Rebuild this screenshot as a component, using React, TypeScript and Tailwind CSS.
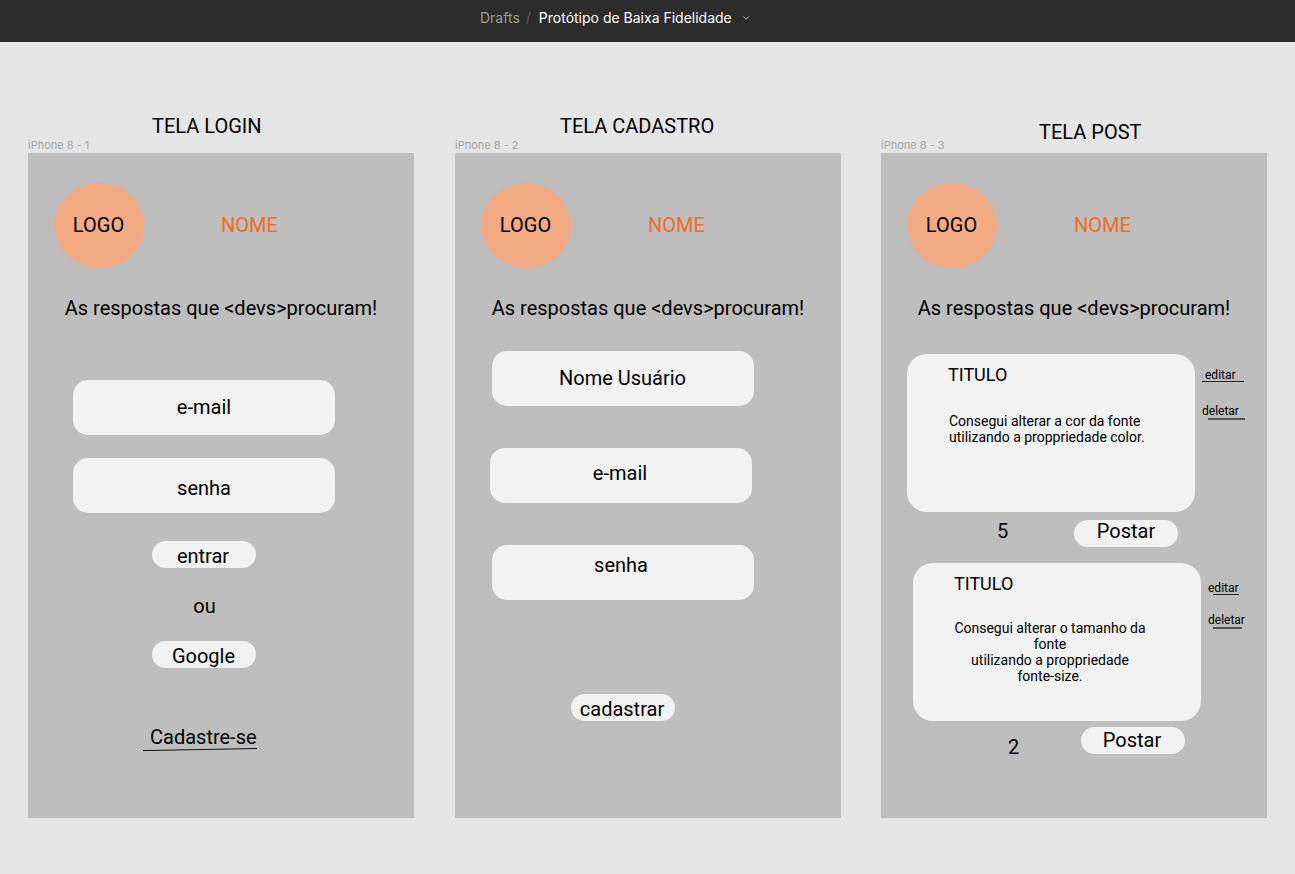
import React from 'react';
import { ChevronDown } from 'lucide-react';

const roboto = "font-['Roboto',sans-serif]";

const FrameHead: React.FC<{ title: string; label: string; titleLeft: string; titleGap: string }> = ({
  title,
  label,
  titleLeft,
  titleGap,
}) => (
  <div className="flex h-[111px] flex-col justify-end">
    <div className={`h-6 text-[20px] leading-6 text-black ${roboto} ${titleLeft} ${titleGap}`}>{title}</div>
    <div className="h-4 font-['Inter',sans-serif] text-[11px] leading-4 text-[#a8a8a8]">{label}</div>
  </div>
);

const Brand: React.FC = () => (
  <>
    <div className="ml-[26px] mt-[30px] flex items-center">
      <div className="flex h-[85px] w-[90px] items-center justify-center rounded-[50%] bg-[#f2ab82] pb-[2px] pr-[1px] text-[20px] text-black">
        LOGO
      </div>
      <div className="ml-[77px] pb-[2px] text-[20px] text-[#f26c24]">NOME</div>
    </div>
    <div className="mt-[28px] h-6 text-center text-[20px] leading-6 text-black">
      As respostas que &lt;devs&gt;procuram!
    </div>
  </>
);

const Field: React.FC<{ text: string; className: string }> = ({ text, className }) => (
  <div
    className={`flex h-[55px] w-[262px] justify-center rounded-[15px] bg-[#f2f2f2] text-[20px] leading-6 text-black ${className}`}
  >
    {text}
  </div>
);

const Pill: React.FC<{ text: string; className: string }> = ({ text, className }) => (
  <div
    className={`flex h-[27px] w-[104px] items-center justify-center rounded-full bg-[#f2f2f2] text-[20px] leading-6 text-black ${className}`}
  >
    {text}
  </div>
);

const Frame: React.FC<{ children: React.ReactNode }> = ({ children }) => (
  <div className={`flex h-[665px] w-[386px] flex-col bg-[#bebebe] ${roboto}`}>{children}</div>
);

const SideLink: React.FC<{ text: string; textLeft: string; lineClass: string; className: string }> = ({
  text,
  textLeft,
  lineClass,
  className,
}) => (
  <div className={`relative h-4 w-[50px] text-[12px] leading-4 text-black ${className}`}>
    <span className={textLeft}>{text}</span>
    <div className={`absolute bg-[#222] ${lineClass}`} />
  </div>
);

const App: React.FC = () => {
  return (
    <div className="flex h-[874px] w-[1295px] flex-col overflow-hidden bg-[#e5e5e5]">
      {/* Top bar */}
      <header className="flex h-[42px] items-center bg-[#2c2c2c] pb-[7px] pl-[480px] font-['Inter',sans-serif] text-[14px]">
        <span className="text-[#9a9a9a]">Drafts</span>
        <span className="ml-[6px] text-[#5f5f5f]">/</span>
        <span className="ml-[8px] text-white">Protótipo de Baixa Fidelidade</span>
        <ChevronDown className="ml-[9px] mt-[1px] text-[#d0d0d0]" size={10} strokeWidth={2} />
      </header>

      {/* Canvas */}
      <main className="flex pl-[28px]">
        <section className="w-[386px]">
          <FrameHead title="TELA LOGIN" label="iPhone 8 - 1" titleLeft="pl-[124px]" titleGap="mb-[-1px]" />
          <Frame>
            <Brand />
            <Field text="e-mail" className="ml-[45px] mt-[60px] pt-[15px]" />
            <Field text="senha" className="ml-[45px] mt-[23px] pt-[18px]" />
            <Pill text="entrar" className="ml-[124px] mt-[28px] pr-[2px] pt-[2px]" />
            <div className="mt-[26px] h-6 pr-[33px] text-center text-[20px] leading-6 text-black">ou</div>
            <Pill text="Google" className="ml-[124px] mt-[23px] pr-[1px] pt-[2px]" />
            <div className="relative ml-[122px] mt-[57px] h-6 w-[120px] text-[20px] leading-6 text-black">
              Cadastre-se
              <svg className="absolute left-[-7px] top-[22px]" width="116" height="5" viewBox="0 0 116 5">
                <line x1="0" y1="3.6" x2="114" y2="1.5" stroke="#111" strokeWidth="1" />
              </svg>
            </div>
          </Frame>
        </section>

        <section className="ml-[41px] w-[386px]">
          <FrameHead title="TELA CADASTRO" label="iPhone 8 - 2" titleLeft="pl-[105px]" titleGap="mb-[-1px]" />
          <Frame>
            <Brand />
            <Field text="Nome Usuário" className="ml-[37px] mt-[31px] pr-[1px] pt-[15px]" />
            <Field text="e-mail" className="ml-[35px] mt-[42px] pr-[2px] pt-[13px]" />
            <Field text="senha" className="ml-[37px] mt-[42px] pr-[4px] pt-[8px]" />
            <Pill text="cadastrar" className="ml-[116px] mt-[94px] pr-[2px] pt-[2px]" />
          </Frame>
        </section>

        <section className="ml-[40px] w-[386px]">
          <FrameHead title="TELA POST" label="iPhone 8 - 3" titleLeft="pl-[158px]" titleGap="mb-[-7px]" />
          <Frame>
            <Brand />

            <div className="ml-[26px] mt-[34px] flex">
              <article className="h-[158px] w-[288px] rounded-[20px] bg-[#f2f2f2] pl-[41px] pt-[10px] text-black">
                <div className="text-[18px] leading-[22px]">TITULO</div>
                <p className="ml-[1px] mt-[27px] text-[14px] leading-4">
                  Consegui alterar a cor da fonte
                  <br />
                  utilizando a proppriedade color.
                </p>
              </article>
              <div className="flex flex-col">
                <SideLink text="editar" textLeft="ml-[10px]" lineClass="left-[7px] top-[14px] h-px w-[42px]" className="mt-[13px]" />
                <SideLink text="deletar" textLeft="ml-[7px]" lineClass="left-[13px] top-[15px] h-[2px] w-[37px] !bg-[#555]" className="mt-[20px]" />
              </div>
            </div>
            <div className="ml-[116px] mt-[8px] flex h-[27px]">
              <div className="h-[27px] w-[77px] text-[20px] leading-[23px] text-black">5</div>
              <Pill text="Postar" className="pb-[5px]" />
            </div>

            <div className="ml-[32px] mt-[16px] flex">
              <article className="h-[158px] w-[288px] rounded-[20px] bg-[#f2f2f2] pt-[10px] text-black">
                <div className="pl-[41px] text-[18px] leading-[22px]">TITULO</div>
                <p className="mt-[25px] pr-[14px] text-center text-[14px] leading-4">
                  Consegui alterar o tamanho da
                  <br />
                  fonte
                  <br />
                  utilizando a proppriedade
                  <br />
                  fonte-size.
                </p>
              </article>
              <div className="flex flex-col">
                <SideLink text="editar" textLeft="ml-[7px]" lineClass="left-[12px] top-[14px] h-px w-[26px]" className="mt-[17px]" />
                <SideLink text="deletar" textLeft="ml-[7px]" lineClass="left-[12px] top-[15px] h-[2px] w-[29px] !bg-[#555]" className="mt-[16px]" />
              </div>
            </div>
            <div className="ml-[127px] mt-[6px] flex">
              <div className="mt-[7px] w-[73px] text-[20px] leading-[27px] text-black">2</div>
              <Pill text="Postar" className="pb-[1px] pr-[2px]" />
            </div>
          </Frame>
        </section>
      </main>
    </div>
  );
};

export default App;
